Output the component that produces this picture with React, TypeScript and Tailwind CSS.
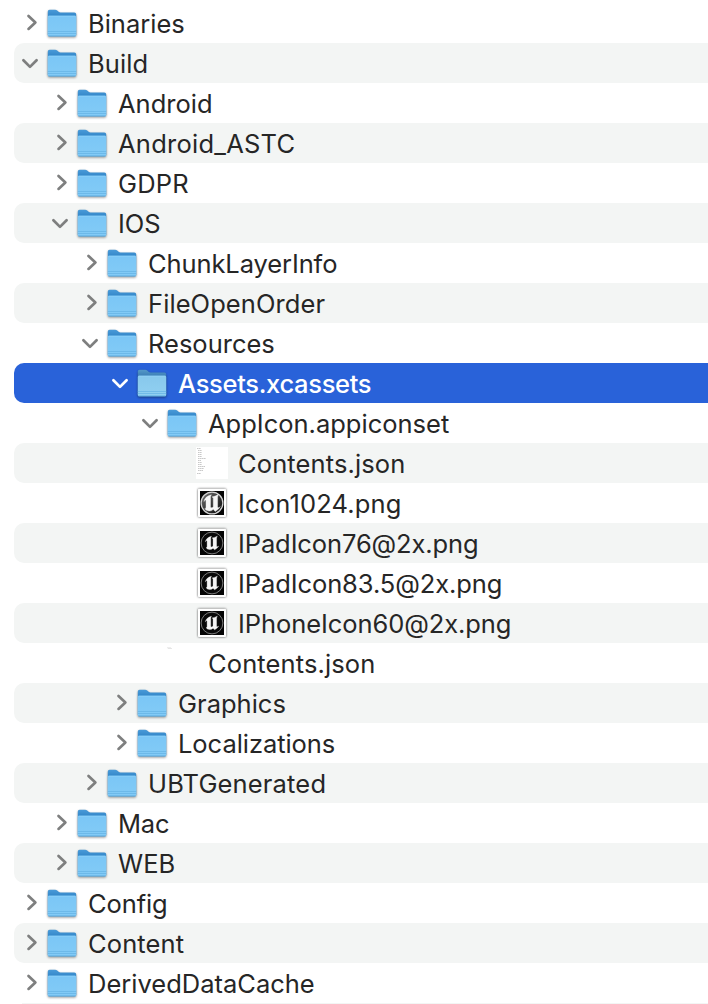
import React from "react";

type Kind = "folder" | "image" | "gloss" | "json" | "blank";
type Row = {
  name: string;
  depth: number;
  kind?: Kind;
  open?: boolean;
  selected?: boolean;
  tracking?: string;
};

const rows: Row[] = [
  { name: "Binaries", depth: 0 },
  { name: "Build", depth: 0, open: true, tracking: "tracking-[0.1px]" },
  { name: "Android", depth: 1 },
  { name: "Android_ASTC", depth: 1, tracking: "tracking-[0.25px]" },
  { name: "GDPR", depth: 1, tracking: "tracking-[0.15px]" },
  { name: "IOS", depth: 1, open: true },
  { name: "ChunkLayerInfo", depth: 2, tracking: "tracking-[-0.1px]" },
  { name: "FileOpenOrder", depth: 2, tracking: "tracking-[0.08px]" },
  { name: "Resources", depth: 2, open: true },
  { name: "Assets.xcassets", depth: 3, open: true, selected: true, tracking: "tracking-[-0.32px]" },
  { name: "AppIcon.appiconset", depth: 4, open: true },
  { name: "Contents.json", depth: 5, kind: "json", tracking: "tracking-[0.12px]" },
  { name: "Icon1024.png", depth: 5, kind: "gloss", tracking: "tracking-[0.16px]" },
  { name: "IPadIcon76@2x.png", depth: 5, kind: "image", tracking: "tracking-[-0.11px]" },
  { name: "IPadIcon83.5@2x.png", depth: 5, kind: "image", tracking: "tracking-[-0.09px]" },
  { name: "IPhoneIcon60@2x.png", depth: 5, kind: "image", tracking: "tracking-[-0.08px]" },
  { name: "Contents.json", depth: 4, kind: "blank", tracking: "tracking-[0.12px]" },
  { name: "Graphics", depth: 3 },
  { name: "Localizations", depth: 3, tracking: "tracking-[-0.05px]" },
  { name: "UBTGenerated", depth: 2, tracking: "tracking-[0.16px]" },
  { name: "Mac", depth: 1, tracking: "tracking-[-0.2px]" },
  { name: "WEB", depth: 1 },
  { name: "Config", depth: 0, tracking: "tracking-[-0.1px]" },
  { name: "Content", depth: 0, tracking: "tracking-[0.12px]" },
  { name: "DerivedDataCache", depth: 0 },
];

const indents = ["pl-[5px]", "pl-[35px]", "pl-[65px]", "pl-[95px]", "pl-[125px]", "pl-[155px]"];

function Chevron({ open, selected }: { open?: boolean; selected?: boolean }) {
  return (
    <svg width="28" height="40" viewBox="0 0 28 40" fill="none" className={selected ? "text-white" : "text-[#7e7f7f]"}>
      <path
        d={open ? "M4.4 17.2L11 23.9L17.6 17.2" : "M9.5 12.9L16.4 19.4L9.5 25.9"}
        stroke="currentColor"
        strokeWidth="2.7"
        strokeLinecap="round"
        strokeLinejoin="round"
      />
    </svg>
  );
}

function Folder({ selected }: { selected?: boolean }) {
  return (
    <svg width="30" height="40" viewBox="0 0 30 40" className="drop-shadow-[0_1px_0.8px_rgba(0,0,0,0.4)]">
      <defs>
        <linearGradient id="folderBack" x1="0" y1="0" x2="0" y2="1">
          <stop offset="0" stopColor="#4a9bd8" />
          <stop offset="0.25" stopColor="#3285c8" />
          <stop offset="1" stopColor="#3285c8" />
        </linearGradient>
        <linearGradient id="folderFront" x1="0" y1="0" x2="0" y2="1">
          <stop offset="0" stopColor="#7ac6f6" />
          <stop offset="1" stopColor="#83cbf6" />
        </linearGradient>
        <linearGradient id="folderBackSelected" x1="0" y1="0" x2="0" y2="1">
          <stop offset="0" stopColor="#5499c8" />
          <stop offset="0.25" stopColor="#3b7db5" />
          <stop offset="1" stopColor="#3b7db5" />
        </linearGradient>
        <linearGradient id="folderFrontSelected" x1="0" y1="0" x2="0" y2="1">
          <stop offset="0" stopColor="#87c8ec" />
          <stop offset="1" stopColor="#91d0f1" />
        </linearGradient>
      </defs>
      <path
        d="M.8 8.6Q.8 6.8 2.6 6.8H8.2Q9.4 6.8 10.2 7.6L11.6 8.8Q12.4 9.4 13.5 9.4H27.3Q29.2 9.4 29.2 11.2V31.9Q29.2 33.3 27.8 33.3H2.2Q.8 33.3 .8 31.9Z"
        fill={selected ? "url(#folderBackSelected)" : "url(#folderBack)"}
      />
      <path
        d="M.8 14Q.8 12.7 2.1 12.7H27.9Q29.2 12.7 29.2 14V31.9Q29.2 33.3 27.8 33.3H2.2Q.8 33.3 .8 31.9Z"
        fill={selected ? "url(#folderFrontSelected)" : "url(#folderFront)"}
      />
      <path d="M1.6 13.1H28.4" stroke="#98d6fa" strokeWidth=".6" />
      <path d="M.8 28.5H29.2M.8 30.5H29.2" stroke="#64b2e4" strokeWidth=".7" />
      <path d="M1.3 32.9H28.7" stroke="#57a8dd" strokeWidth=".8" />
    </svg>
  );
}

function Thumb({ gloss }: { gloss?: boolean }) {
  return (
    <svg width="30" height="40" viewBox="0 0 30 40" className="drop-shadow-[0_0.5px_1px_rgba(0,0,0,0.7)]">
      <defs>
        <linearGradient id="gloss" x1="0" y1="0" x2="1" y2="1">
          <stop offset="0" stopColor="#777" />
          <stop offset="0.55" stopColor="#333" />
          <stop offset="1" stopColor="#080808" />
        </linearGradient>
      </defs>
      <rect x="1" y="5.7" width="28" height="28.3" rx=".8" fill="#fff" />
      <rect x="3" y="8" width="24" height="24" fill="#050505" />
      <circle cx="15" cy="20" r="10.9" fill={gloss ? "url(#gloss)" : "#080808"} stroke={gloss ? "#d4d4d4" : "#8a8a8a"} strokeWidth={gloss ? 1.3 : 0.9} />
      <g transform={gloss ? "translate(15 20) scale(1.27) translate(-15 -20)" : "translate(15 20) scale(1.04) translate(-15 -20)"}>
        <path
          d="M8.6 18.8Q9.6 14.7 14.5 13.6Q13.8 14.4 13.8 15.6V23Q13.9 24 14.8 23.8Q15.5 23.6 16 22.9V16.2Q16 15.4 15 15.3Q17.4 14.8 20.1 13.4Q19.4 14.3 19.4 15.6V22.9Q19.5 23.8 20.2 23.7Q20.9 23.5 21.5 22.9Q20.1 25.3 17.5 26.6L16 25Q14.6 26.5 12.6 26.3Q10.2 26 9.3 24.5Q10.3 24.5 10.3 23.3V18.3Q10.2 16.9 8.6 18.8Z"
          fill="#f6f6f6"
          stroke="#f6f6f6"
          strokeWidth=".35"
        />
      </g>
    </svg>
  );
}

function JsonDoc() {
  return (
    <svg width="32" height="32" viewBox="0 0 32 32" className="-ml-px">
      <rect width="32" height="32" fill="#fff" />
      <path d="M1 1.5H5M2 3.5H6M2 5.5H6M2 7.5H5.5M2 9.5H6M2 11.5H10M2 13.5H5M2 15.5H6M2 17.5H6M2 19.5H9M2 21.5H8M2 23.5H7M1 26.5H5" stroke="#777" strokeWidth=".8" strokeDasharray="1.6 .4" opacity=".5" />
    </svg>
  );
}

function BlankDoc() {
  return (
    <svg width="30" height="40" viewBox="0 0 30 40">
      <path d="M0 4.8H4M1 5.5H5" stroke="#ddd" strokeWidth=".7" />
    </svg>
  );
}

function FileIcon({ kind, selected }: { kind: Kind; selected?: boolean }) {
  if (kind === "folder") return <Folder selected={selected} />;
  if (kind === "json") return <JsonDoc />;
  if (kind === "blank") return <BlankDoc />;
  return <Thumb gloss={kind === "gloss"} />;
}

function FileRow({ row, striped }: { row: Row; striped: boolean }) {
  const kind = row.kind ?? "folder";
  const background = row.selected ? "bg-[#2962d9] text-white font-medium" : striped ? "bg-[#f3f5f4] text-[#262626]" : "text-[#262626]";
  return (
    <li className={`flex h-10 items-center rounded-l-[10px] ${background} ${indents[row.depth]}`}>
      <div className="flex w-7 shrink-0">{kind === "folder" && <Chevron open={row.open} selected={row.selected} />}</div>
      <div className="flex w-[41px] shrink-0 items-center">
        <FileIcon kind={kind} selected={row.selected} />
      </div>
      <span className={`whitespace-nowrap pt-0.5 leading-10 ${row.tracking ?? ""}`}>{row.name}</span>
    </li>
  );
}

export default function App() {
  return (
    <main className="h-[1004px] w-[708px] overflow-hidden bg-white pt-[3px] pl-3.5 font-['Inter',sans-serif] text-[25.5px]">
      <ul>
        {rows.map((row, index) => (
          <FileRow key={index} row={row} striped={index % 2 === 1} />
        ))}
      </ul>
      <div className="ml-2 h-px bg-[#f3f5f4]" />
    </main>
  );
}
